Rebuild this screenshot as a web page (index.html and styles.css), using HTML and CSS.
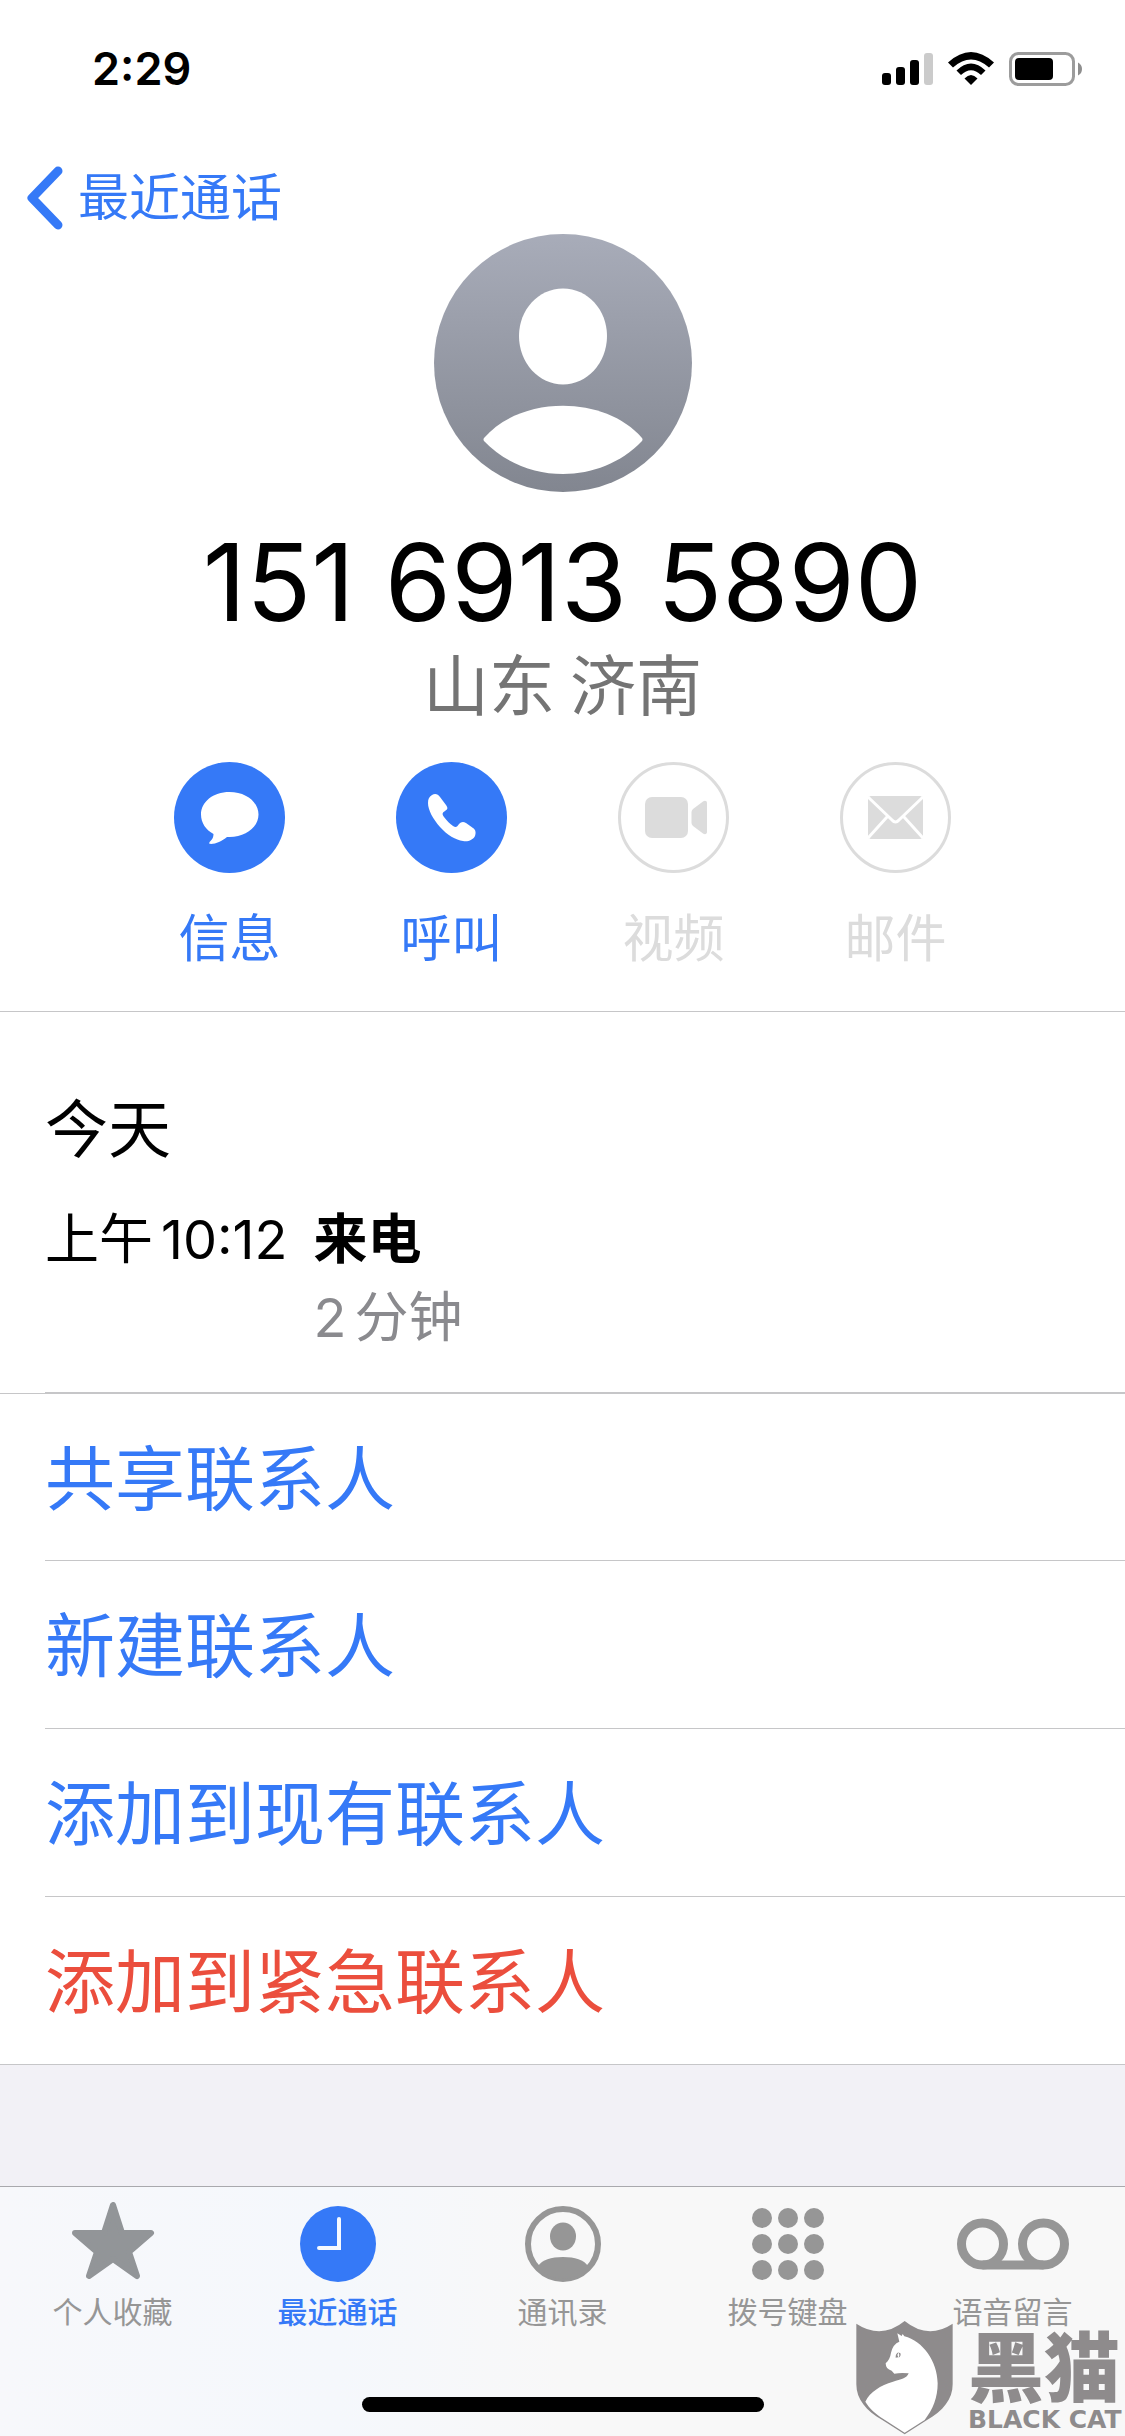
FILE: index.html
```html
<!DOCTYPE html>
<html lang="zh-CN">
  <head>
    <meta charset="UTF-8" />
    <meta name="viewport" content="width=device-width, initial-scale=1.0" />
    <title>最近通话</title>
    <link rel="stylesheet" href="styles.css">
  </head>
  <body>
    <div class="screen">
      <div class="status-bar">
        <span class="clock">2:29</span>
        <svg class="status-icons" width="202" height="36" viewBox="881 51 202 36">
          <!-- signal -->
          <rect x="882" y="73" width="9" height="12" rx="3" />
          <rect x="896" y="67" width="9" height="18" rx="3" />
          <rect x="910" y="60" width="9" height="25" rx="3" />
          <rect x="924" y="53" width="9" height="32" rx="3" fill="#cbcbcb" />
          <!-- wifi -->
          <path d="M948 62.500Q971 41.500 994 62.500L989 67.500Q971 51.500 953 67.500Z" />
          <path d="M956.500 70.500Q971 56.500 985.500 70.500L981 75Q971 65.500 961 75Z" />
          <path d="M964.500 78.500Q971 71.500 977.500 78.500L971 85Z" />
          <!-- battery -->
          <rect x="1010.500" y="53.500" width="63" height="31" rx="8" fill="none" stroke="#9c9c9c" stroke-width="3" />
          <rect x="1015" y="58" width="38" height="22" rx="4" />
          <path d="M1078 62.500Q1082 64.500 1082 69T1078 75.500Z" fill="#8e8e8e" />
        </svg>
      </div>

      <header class="nav-bar">
        <a class="back" href="#">
          <svg width="38" height="64" viewBox="0 0 38 64" fill="none" stroke="currentColor" stroke-width="9" stroke-linecap="round" stroke-linejoin="round">
            <path d="M32 5L6 32L32 59" />
          </svg>
          最近通话
        </a>
      </header>

      <section class="contact">
        <svg class="avatar" viewBox="0 0 258 258">
          <defs>
            <linearGradient id="avatarFill" x1="0" y1="0" x2="0" y2="1">
              <stop offset="0" stop-color="#a8acb9" />
              <stop offset="1" stop-color="#828690" />
            </linearGradient>
          </defs>
          <circle cx="129" cy="129" r="129" fill="url(#avatarFill)" />
          <path fill="#fff" d="M129 54.500C154 54.500 173 76 173 102C173 129 153 150.500 129 150.500S85 129 85 102C85 76 104 54.500 129 54.500Z" />
          <path fill="#fff" d="M50 204C87 161 171 161 208 204Q209 205.500 208 207C166 251 92 251 50 207Q49 205.500 50 204Z" />
        </svg>
        <h1 class="number">151 6913 5890</h1>
        <p class="place">山东 济南</p>

        <div class="actions">
          <button class="action" type="button">
            <svg class="action-icon" viewBox="0 0 111 111">
              <circle cx="55.500" cy="55.500" r="55.500" fill="#3579f7" />
              <path fill="#fff" d="M55.500 30C72 30 84.500 40 84.500 52.500S72 75 55.500 75H53C48 79 42 82 37 82C34.500 82 35 80.500 36.500 79C38.500 77 39.500 75 39.500 72C32 68 27 61 27 52.500C27 40 39 30 55.500 30Z" />
            </svg>
            信息
          </button>
          <button class="action" type="button">
            <svg class="action-icon" viewBox="0 0 111 111">
              <circle cx="55.500" cy="55.500" r="55.500" fill="#3579f7" />
              <path fill="#fff" d="M36 33C39 31 42 32 44 35L50 43C52 46 52 47 49 49C46 51 46 52 48 55C51 59 54 62 57 64C60 66 61 65 63 62C65 60 67 59 70 61L77 66C80 68 80 71 79 74C77 78 72 80 67 79C60 78 51 73 44 65C37 57 32 48 32 41C32 37 33 35 36 33Z" />
            </svg>
            呼叫
          </button>
          <button class="action" type="button" disabled>
            <svg class="action-icon" viewBox="0 0 111 111">
              <circle cx="55.500" cy="55.500" r="54" fill="none" stroke="#dcdcdc" stroke-width="3" />
              <rect x="27" y="35" width="43" height="41" rx="7" fill="#dcdcdc" />
              <path fill="#dcdcdc" d="M73.500 50C73.500 49 74 48 75 47L85 39.500C87 38 89 39 89 41V70C89 72 87 73 85 71.500L75 64C74 63 73.500 62 73.500 61Z" />
            </svg>
            视频
          </button>
          <button class="action" type="button" disabled>
            <svg class="action-icon" viewBox="0 0 111 111">
              <circle cx="55.500" cy="55.500" r="54" fill="none" stroke="#dcdcdc" stroke-width="3" />
              <rect x="28" y="34" width="55" height="43" rx="3" fill="#dcdcdc" />
              <path d="M28 35L52 58Q55.500 62 59 58L83 35M28 76L47 55M83 76L64 55" fill="none" stroke="#fff" stroke-width="3" />
            </svg>
            邮件
          </button>
        </div>
      </section>

      <section class="history">
        <h2 class="day">今天</h2>
        <div class="call">
          <div class="call-time"><span>上午</span><span>10:12</span></div>
          <div>
            <div class="call-type">来电</div>
            <div class="call-length"><span>2</span><span>分钟</span></div>
          </div>
        </div>
      </section>

      <div class="options">
        <button class="option" type="button">共享联系人</button>
        <button class="option" type="button">新建联系人</button>
        <button class="option" type="button">添加到现有联系人</button>
        <button class="option danger" type="button">添加到紧急联系人</button>
      </div>

      <footer class="bottom">
        <nav class="tabs">
          <a class="tab" href="#">
            <svg class="tab-icon" viewBox="0 0 112 80">
              <path fill="#929598" stroke="#929598" stroke-width="6" stroke-linejoin="round" d="M56 3L47 31H18L40 50L32 74L56 57L80 74L72 50L94 31H65Z" />
            </svg>
            个人收藏
          </a>
          <a class="tab active" href="#">
            <svg class="tab-icon" viewBox="0 0 112 80">
              <circle cx="56" cy="42" r="38" fill="#3579f7" />
              <path d="M57 17V46H37" fill="none" stroke="#f5f9ff" stroke-width="4" stroke-linecap="round" />
            </svg>
            最近通话
          </a>
          <a class="tab" href="#">
            <svg class="tab-icon" viewBox="0 0 112 80">
              <circle cx="56" cy="42" r="35" fill="none" stroke="#969696" stroke-width="6" />
              <ellipse cx="56" cy="34.500" rx="13" ry="14" fill="#969696" />
              <path fill="#969696" d="M31 64C35 58 44 55 56 55S77 58 81 64Q71 77 56 77T31 64Z" />
            </svg>
            通讯录
          </a>
          <a class="tab" href="#">
            <svg class="tab-icon" viewBox="0 0 112 80" fill="#969696">
              <circle cx="30" cy="16" r="10" /><circle cx="56" cy="16" r="10" /><circle cx="82" cy="16" r="10" />
              <circle cx="30" cy="42" r="10" /><circle cx="56" cy="42" r="10" /><circle cx="82" cy="42" r="10" />
              <circle cx="30" cy="68" r="10" /><circle cx="56" cy="68" r="10" /><circle cx="82" cy="68" r="10" />
            </svg>
            拨号键盘
          </a>
          <a class="tab" href="#">
            <svg class="tab-icon" viewBox="0 0 112 80" fill="none" stroke="#969696" stroke-width="9">
              <circle cx="25.500" cy="42" r="21" />
              <circle cx="86.500" cy="42" r="21" />
              <path d="M25.500 63H86.500" />
            </svg>
            语音留言
          </a>
        </nav>
        <div class="home-indicator"></div>

        <div class="watermark">
          <svg width="98" height="116" viewBox="49 32 294 348">
            <path fill="#8e8b8c" d="M50 43Q125 92 195 35Q265 92 339 43V225C339 270 310 305 262 332L195 375L128 332C80 305 50 270 50 225Z" />
            <path fill="#fff" d="M173 72L186 80L189 74L194 81C250 96 293 155 294 222C294 265 280 300 255 332L195 370L130 328C108 314 88 296 77 277C92 246 122 229 160 217C184 210 201 208 207 192Q184 189 164 193L156 184Q138 180 138 162C147 153 152 145 154 130Q160 104 179 97Z" />
            <path fill="#8e8b8c" d="M168 145Q167 133 177 129L173 137L176 144ZM177 145L179 137L177 130Q184 129 183 137Q182 142 177 145Z" />
          </svg>
          <div class="brand">
            <span class="brand-cn">黑猫</span>
            <span class="brand-en">BLACK CAT</span>
          </div>
        </div>
      </footer>
    </div>
  </body>
</html>
```
FILE: styles.css
```css
* {
  box-sizing: border-box;
}
body {
  margin: 0;
  background: #f2f1f6;
  color: #000;
  font-family: Inter, "Noto Sans CJK SC", sans-serif;
}
h1,
h2,
p {
  margin: 0;
  font-weight: 400;
}
svg {
  display: block;
  flex: none;
}
a {
  text-decoration: none;
}
button {
  margin: 0;
  padding: 0;
  border: none;
  background: none;
  font-family: inherit;
  cursor: pointer;
}
.screen {
  display: flex;
  flex-direction: column;
  min-height: 100vh;
}

/* status bar */
.status-bar {
  display: flex;
  justify-content: space-between;
  align-items: center;
  height: 138px;
  padding: 0 42px 0 92px;
  background: #fff;
}
.clock {
  font-size: 45px;
  font-weight: 600;
  line-height: 60px;
}

/* navigation */
.nav-bar {
  padding: 24px 26px 0;
  background: #fff;
}
.back {
  display: inline-flex;
  align-items: center;
  gap: 14px;
  height: 72px;
  color: #3579f7;
  font-size: 51px;
  line-height: 72px;
}

/* contact card */
.contact {
  display: flex;
  flex-direction: column;
  align-items: center;
  padding-bottom: 35px;
  background: #fff;
  border-bottom: 1px solid #c6c6c8;
}
.avatar {
  width: 258px;
  height: 258px;
}
.number {
  margin-top: 30px;
  font-size: 107px;
  line-height: 120px;
}
.place {
  color: #747474;
  font-family: "Noto Sans CJK SC", sans-serif;
  font-size: 66px;
  line-height: 78px;
}
.actions {
  display: flex;
  gap: 111px;
  margin-top: 42px;
}
.action {
  display: flex;
  flex-direction: column;
  align-items: center;
  gap: 28px;
  width: 111px;
  color: #3579f7;
  font-size: 51px;
  line-height: 75px;
}
.action:disabled {
  color: #dcdcdc;
  cursor: default;
}
.action-icon {
  width: 111px;
  height: 111px;
}

/* call history */
.history {
  padding: 72px 0 0 45px;
  background: #fff;
}
.day {
  font-size: 63px;
  line-height: 90px;
}
.call {
  display: flex;
  gap: 26px;
  margin-top: 27px;
  padding-bottom: 35px;
  border-bottom: 1px solid #c6c6c8;
  font-size: 54px;
  line-height: 78px;
}
.call-time,
.call-length {
  display: flex;
  gap: 8px;
}
.call-type {
  font-weight: 600;
}
.call-length {
  color: #8a8a8e;
}

/* options list */
.options {
  background: #fff;
  border-top: 1px solid #c6c6c8;
  border-bottom: 1px solid #c6c6c8;
  padding-left: 45px;
}
.option {
  display: block;
  width: 100%;
  height: 168px;
  padding-bottom: 6px;
  border-bottom: 1px solid #c6c6c8;
  color: #3579f7;
  font-size: 70px;
  text-align: left;
}
.option:first-child,
.option:last-child {
  height: 167px;
}
.option:last-child {
  border-bottom: none;
}
.option.danger {
  color: #eb4e3d;
}

/* tab bar */
.bottom {
  position: relative;
  margin-top: auto;
  padding-bottom: 24px;
  background: linear-gradient(90deg, #f7f8fb, #f5f8fc 30%, #f8f8f8 50%);
  border-top: 1px solid #a9a9ad;
}
.tabs {
  display: grid;
  grid-template-columns: repeat(5, 1fr);
  padding-top: 15px;
}
.tab {
  display: flex;
  flex-direction: column;
  align-items: center;
  gap: 8px;
  color: #969696;
  font-size: 30px;
  line-height: 45px;
}
.tab.active {
  color: #3579f7;
  font-weight: 500;
}
.tab-icon {
  width: 112px;
  height: 80px;
}
.home-indicator {
  width: 402px;
  height: 15px;
  margin: 62px auto 0;
  border-radius: 8px;
  background: #000;
}

/* watermark over the tab bar corner */
.watermark {
  position: absolute;
  right: 0;
  bottom: 0;
  display: flex;
  align-items: flex-end;
  gap: 14px;
  color: #8e8b8c;
}
.brand {
  display: flex;
  flex-direction: column;
  width: 157px;
}
.brand-cn {
  font-size: 76px;
  font-weight: 900;
  line-height: 72px;
}
.brand-en {
  font-family: "DejaVu Sans", sans-serif;
  font-size: 25px;
  font-weight: 700;
  line-height: 32px;
  white-space: nowrap;
}
```
